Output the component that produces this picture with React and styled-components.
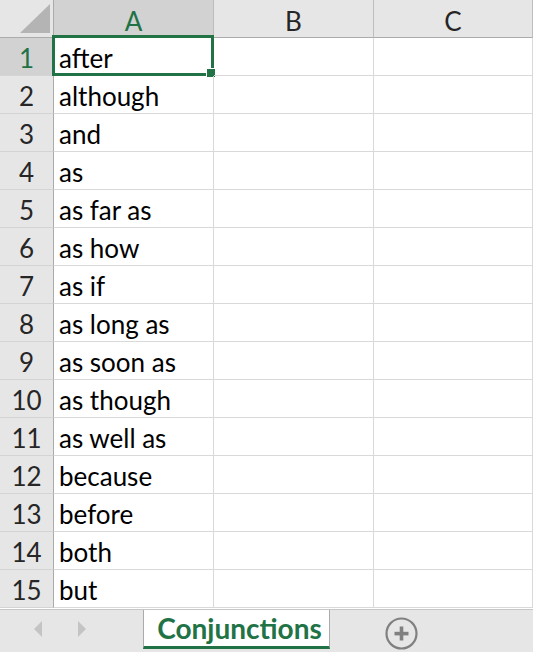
import React from "react";
import styled, { createGlobalStyle } from "styled-components";

const GlobalStyle = createGlobalStyle`
  * { box-sizing: border-box; }
  body {
    margin: 0;
    background: #ffffff;
    font-family: Lato, "Open Sans", sans-serif;
  }
`;

const words = [
  "after",
  "although",
  "and",
  "as",
  "as far as",
  "as how",
  "as if",
  "as long as",
  "as soon as",
  "as though",
  "as well as",
  "because",
  "before",
  "both",
  "but"
];

const Sheet = styled.div`
  width: 533px;
  height: 652px;
  display: flex;
  flex-direction: column;
  overflow: hidden;
`;

const Grid = styled.div`
  display: grid;
  grid-template-columns: 54px 160px 160px 159px;
  grid-auto-rows: 38px;
  height: 609px;
  overflow: hidden;
  flex-shrink: 0;
`;

const Corner = styled.div`
  position: relative;
  background: #e6e6e6;
  border-right: 1px solid #ababab;
  border-bottom: 1px solid #ababab;
  display: flex;
  align-items: flex-end;
  justify-content: flex-end;
  padding: 0 3px 4px 0;
`;

const ColHeader = styled.div`
  background: ${(p) => (p.$selected ? "#d2d2d2" : "#e6e6e6")};
  color: ${(p) => (p.$selected ? "#217346" : "#262626")};
  border-right: 1px solid #bdbdbd;
  border-bottom: 1px solid #ababab;
  display: flex;
  align-items: center;
  justify-content: center;
  font-size: 26px;
  padding-top: 4px;
`;

const RowHeader = styled.div`
  background: ${(p) => (p.$selected ? "#d2d2d2" : "#e6e6e6")};
  color: ${(p) => (p.$selected ? "#217346" : "#262626")};
  border-right: 1px solid #ababab;
  border-bottom: 1px solid #d4d4d4;
  display: flex;
  align-items: center;
  justify-content: center;
  font-size: 26px;
  padding-top: 2px;
`;

const Cell = styled.div`
  position: relative;
  border-right: 1px solid #d9d9d9;
  border-bottom: 1px solid #d9d9d9;
  display: flex;
  align-items: center;
  padding: 2px 0 0 5px;
  font-size: 26px;
  color: #000000;
  white-space: nowrap;
`;

const Selection = styled.div`
  position: absolute;
  top: -3px;
  left: -2px;
  right: -1px;
  bottom: -1px;
  border: 3px solid #217346;
  pointer-events: none;
`;

const Handle = styled.div`
  position: absolute;
  right: -4px;
  bottom: -4px;
  width: 8px;
  height: 8px;
  background: #217346;
  box-shadow: 0 0 0 1px #ffffff;
`;

const TabBar = styled.div`
  flex: 1;
  background: #e6e6e6;
  border-top: 1px solid #c6c6c6;
  display: flex;
  align-items: flex-start;
`;

const Nav = styled.div`
  width: 143px;
  height: 38px;
  display: flex;
  align-items: center;
  gap: 34px;
  padding-left: 33px;
`;

const Tab = styled.div`
  width: 187px;
  height: 39px;
  background: #ffffff;
  border-left: 1px solid #ababab;
  border-right: 1px solid #ababab;
  border-bottom: 3px solid #217346;
  display: flex;
  align-items: center;
  justify-content: center;
  padding-left: 6px;
  font-size: 28px;
  font-weight: 700;
  color: #217346;
  white-space: nowrap;
`;

const AddButton = styled.div`
  margin-left: 55px;
  margin-top: 7px;
  width: 33px;
  height: 33px;
  display: flex;
  align-items: center;
  justify-content: center;
`;

const Arrow = ({ dir }) => (
  <svg width="10" height="16" viewBox="0 0 10 16">
    {dir === "left" ? (
      <polygon points="9,0 9,16 1,8" fill="#c4c4c4" />
    ) : (
      <polygon points="1,0 1,16 9,8" fill="#c4c4c4" />
    )}
  </svg>
);

const PlusIcon = () => (
  <svg width="33" height="33" viewBox="0 0 33 33">
    <circle cx="16.5" cy="16.5" r="15" fill="none" stroke="#808080" strokeWidth="2.2" />
    <rect x="9.5" y="14.8" width="14" height="3.6" fill="#808080" />
    <rect x="14.7" y="9.5" width="3.6" height="14" fill="#808080" />
  </svg>
);

const CornerTriangle = () => (
  <svg width="30" height="29" viewBox="0 0 30 29">
    <polygon points="30,0 30,29 0,29" fill="#b4b4b4" />
  </svg>
);

export default function App() {
  return (
    <Sheet>
      <GlobalStyle />
      <Grid>
        <Corner>
          <CornerTriangle />
        </Corner>
        <ColHeader $selected>A</ColHeader>
        <ColHeader>B</ColHeader>
        <ColHeader>C</ColHeader>
        {words.map((w, i) => (
          <React.Fragment key={i}>
            <RowHeader $selected={i === 0}>{i + 1}</RowHeader>
            <Cell>
              {w}
              {i === 0 && (
                <Selection>
                  <Handle />
                </Selection>
              )}
            </Cell>
            <Cell />
            <Cell />
          </React.Fragment>
        ))}
      </Grid>
      <TabBar>
        <Nav>
          <Arrow dir="left" />
          <Arrow dir="right" />
        </Nav>
        <Tab>Conjunctions</Tab>
        <AddButton>
          <PlusIcon />
        </AddButton>
      </TabBar>
    </Sheet>
  );
}
